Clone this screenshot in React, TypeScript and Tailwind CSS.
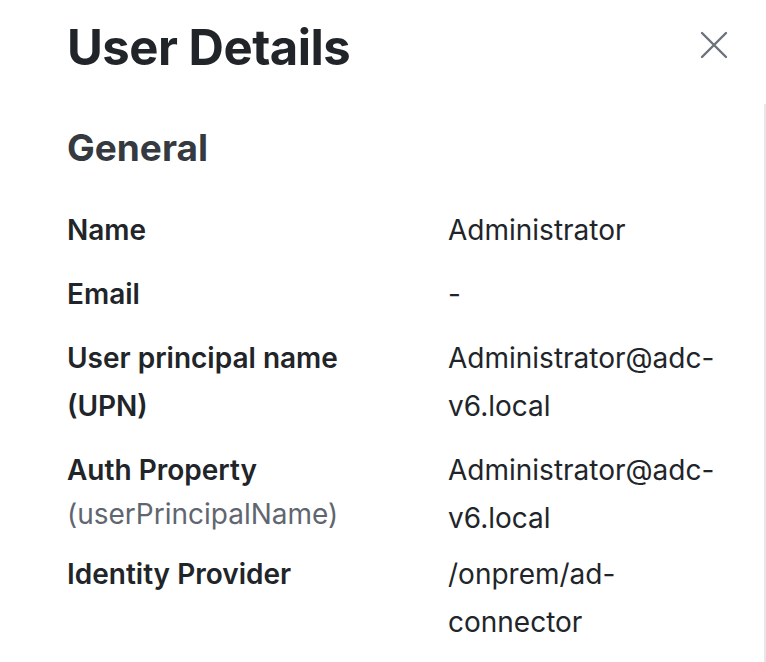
import React from "react";

const rows: { label: string; sub?: string; value: string }[] = [
  { label: "Name", value: "Administrator" },
  { label: "Email", value: "-" },
  { label: "User principal name (UPN)", value: "Administrator@adc-v6.local" },
  { label: "Auth Property", sub: "(userPrincipalName)", value: "Administrator@adc-v6.local" },
  { label: "Identity Provider", value: "/onprem/ad-connector" },
];

export default function App() {
  return (
    <div
      className="w-[766px] h-[662px] bg-white overflow-hidden flex flex-col text-[#22272b]"
      style={{ fontFamily: "Inter, 'Noto Sans', sans-serif" }}
    >
      <div className="flex items-start justify-between pl-[67px] pr-[38px] pt-[20px]">
        <h1 className="text-[49px] font-bold leading-[56px] tracking-[-0.5px] text-[#212529]">User Details</h1>
        <button className="mt-[11px] text-[#6b727b]" aria-label="Close">
          <svg width="28" height="28" viewBox="0 0 28 28" fill="none" stroke="currentColor" strokeWidth="2.4" strokeLinecap="round">
            <path d="M2 2 L26 26 M26 2 L2 26" />
          </svg>
        </button>
      </div>
      <div className="flex flex-1 mt-[28px]">
        <div className="flex-1 pl-[67px] pt-[22px]">
          <h2 className="text-[37px] font-bold leading-[44px] text-[#343a40]">General</h2>
          <div className="mt-[36px] flex flex-col gap-[16px]">
            {rows.map((r) => (
              <div key={r.label} className="flex text-[28px] leading-[48px]">
                <div className="w-[381px] shrink-0 pr-[24px]">
                  <div className="font-semibold text-[#212529]">{r.label}</div>
                  {r.sub && <div className="text-[#5f6670] leading-[40px]">{r.sub}</div>}
                </div>
                <div className={r.sub ? "w-[272px] text-[#212529] -mb-[8px]" : "w-[272px] text-[#212529]"}>{r.value}</div>
              </div>
            ))}
          </div>
        </div>
        <div className="w-[2px] bg-[#e6e7e9]" />
      </div>
    </div>
  );
}
